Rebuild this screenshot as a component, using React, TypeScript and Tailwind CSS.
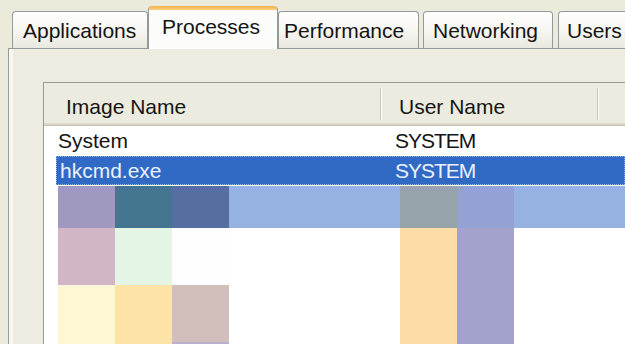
import React from 'react';

type Tab = { label: string; w: string; pl: string; active?: boolean; gap?: string };

const tabs: Tab[] = [
    { label: 'Applications', w: 'w-[136px]', pl: 'pl-[10px]' },
    { label: 'Processes', w: 'w-[130px]', pl: 'pl-[13px]', active: true },
    { label: 'Performance', w: 'w-[141px]', pl: 'pl-[5px]' },
    { label: 'Networking', w: 'w-[130px]', pl: 'pl-[9px]', gap: 'ml-[4px]' },
    { label: 'Users', w: 'w-[90px]', pl: 'pl-[8px]', gap: 'ml-[5px]' },
];

function TabButton({ tab }: { tab: Tab }) {
    if (tab.active) {
        return (
            <div className={`${tab.w} relative z-10 -mb-px h-[43px] flex-shrink-0 rounded-t-[4px] border-x border-[#919B9C] bg-[#FCFCFA] overflow-hidden`}>
                <div className="h-[4px] bg-gradient-to-b from-[#F5B347] to-[#F9CE7A]" />
                <div className={`${tab.pl} pt-[2px] whitespace-nowrap`}>{tab.label}</div>
            </div>
        );
    }
    return (
        <div
            className={`${tab.w} ${tab.gap ?? ''} h-[37px] flex-shrink-0 rounded-t-[4px] border border-b-0 border-[#919B9C] bg-gradient-to-b from-white via-[#F7F6F1] to-[#E9E8E0] pt-[4px] ${tab.pl} whitespace-nowrap`}
        >
            {tab.label}
        </div>
    );
}

export default function App() {
    return (
        <div className="w-[625px] h-[344px] overflow-hidden bg-[#ECEADB] font-['Liberation_Sans',Arial,sans-serif] text-[21px] leading-[30px] text-[#141414]">
            {/* Tab strip */}
            <div className="flex items-end h-[48px] pl-[12px]">
                {tabs.map((t) => (
                    <TabButton key={t.label} tab={t} />
                ))}
            </div>

            {/* Tab page */}
            <div className="ml-[8px] h-[296px] border-l border-t border-[#919B9C] bg-[#EEECE1]">
                <div className="h-full border-l-[4px] border-[#F7F6F0] pl-[30px] pt-[33px]">
                    <div className="h-full border-l border-t border-[#9A9A8E] bg-white">
                        {/* Column header */}
                        <div className="flex h-[43px] bg-[#ECEBDF] shadow-[inset_0_-1px_0_#CBC7B8,inset_0_-2px_0_#D6D2C2,inset_0_-3px_0_#E2DECD]">
                            <div className="w-[336px] flex-shrink-0 pl-[22px] pt-[9px]">Image Name</div>
                            <div className="mt-[5px] h-[32px] w-[2px] flex-shrink-0 border-l border-r border-l-[#C9C6B4] border-r-white" />
                            <div className="w-[215px] flex-shrink-0 pl-[17px] pt-[9px]">User Name</div>
                            <div className="mt-[5px] h-[32px] w-[2px] flex-shrink-0 border-l border-r border-l-[#C9C6B4] border-r-white" />
                            <div className="flex-1" />
                        </div>

                        {/* Rows */}
                        <div className="flex h-[30px] ml-[12px]">
                            <div className="w-[325px] flex-shrink-0 pl-[2px]">System</div>
                            <div className="pl-[14px] tracking-[-1px]">SYSTEM</div>
                        </div>
                        <div className="flex h-[29px] ml-[12px] border border-dotted border-[#9AB4E4] bg-[#316AC5] text-[#EAF2FF] leading-[27px]">
                            <div className="w-[324px] flex-shrink-0 pl-[3px]">hkcmd.exe</div>
                            <div className="pl-[14px] tracking-[-1px]">SYSTEM</div>
                        </div>

                        {/* Pixelated rows */}
                        <div className="flex h-[42px] mt-[1px] ml-[14px]">
                            <div className="w-[57px] bg-[#9F98BF]" />
                            <div className="w-[57px] bg-[#45768F]" />
                            <div className="w-[57px] bg-[#566FA0]" />
                            <div className="w-[171px] bg-[#95B2E1]" />
                            <div className="w-[57px] bg-[#97A3AB]" />
                            <div className="w-[57px] bg-[#93A2D3]" />
                            <div className="flex-1 bg-[#95B2E1]" />
                        </div>
                        <div className="flex h-[57px] ml-[14px]">
                            <div className="w-[57px] bg-[#D2B6C6]" />
                            <div className="w-[57px] bg-[#E5F5E5]" />
                            <div className="w-[57px] bg-[#FDFEFD]" />
                            <div className="w-[171px]" />
                            <div className="w-[57px] bg-[#FDDCA7]" />
                            <div className="w-[57px] bg-[#A3A2CD]" />
                        </div>
                        <div className="flex h-[59px] ml-[14px]">
                            <div className="w-[57px] bg-[#FFF6D3]" />
                            <div className="w-[57px] bg-[#FEE3A6]" />
                            <div className="w-[57px] bg-[#D1BFBC] border-b-2 border-[#B9AFCF]" />
                            <div className="w-[171px]" />
                            <div className="w-[57px] bg-[#FDDCA7]" />
                            <div className="w-[57px] bg-[#A3A2CD]" />
                        </div>
                    </div>
                </div>
            </div>
        </div>
    );
}
